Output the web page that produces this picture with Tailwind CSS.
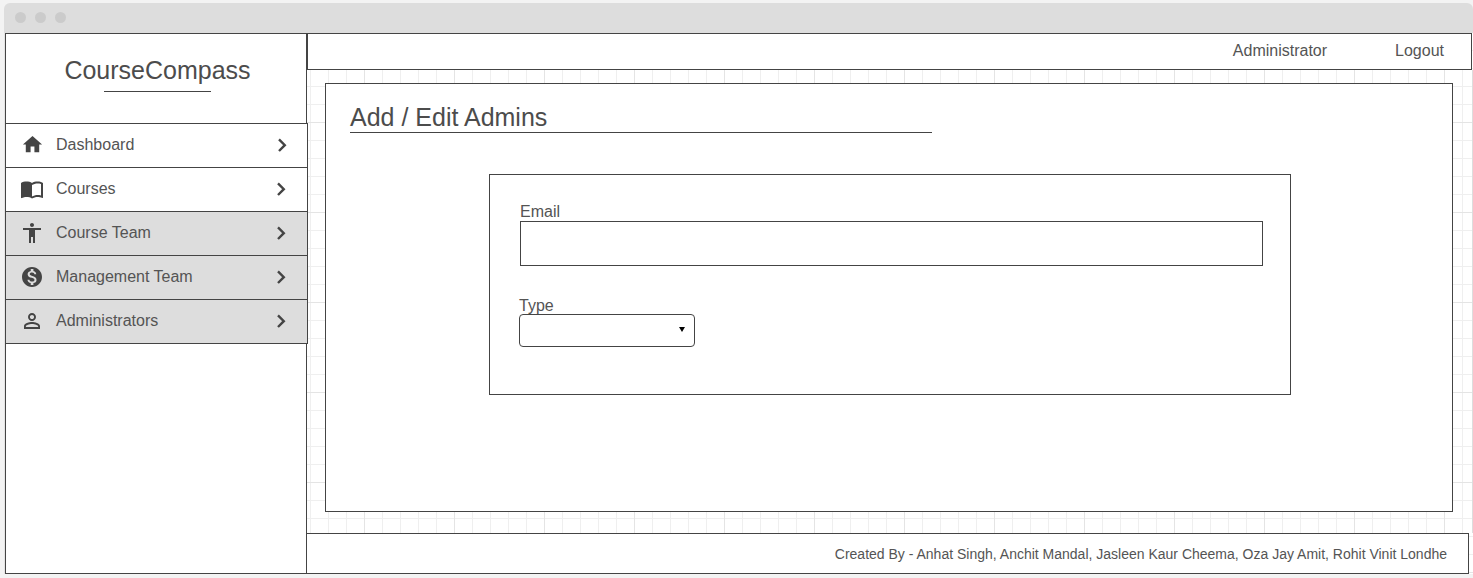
<!DOCTYPE html>
<html lang="en">
<head>
<meta charset="utf-8">
<meta name="viewport" content="width=device-width, initial-scale=1">
<title>CourseCompass</title>
<script src="https://cdn.jsdelivr.net/npm/@tailwindcss/browser@4"></script>
</head>
<body class="flex min-h-screen flex-col bg-[#f3f3f3] pt-[3px] pb-1 pl-1 font-['Liberation_Sans',Arial,sans-serif] text-base text-[#545454]">
  <!-- Window title bar -->
  <div class="flex h-[30px] shrink-0 items-center gap-[9px] rounded-t-md bg-[#ddd] pb-px pl-[11px]">
    <span class="size-[11px] rounded-full bg-[#cbcbcb]"></span>
    <span class="size-[11px] rounded-full bg-[#cbcbcb]"></span>
    <span class="size-[11px] rounded-full bg-[#cbcbcb]"></span>
  </div>

  <div class="flex flex-1 bg-white bg-[linear-gradient(#e4e4e4_1px,transparent_1px),linear-gradient(90deg,#e4e4e4_1px,transparent_1px),linear-gradient(#efefef_1px,transparent_1px),linear-gradient(90deg,#efefef_1px,transparent_1px)] bg-[length:90px_90px,90px_90px,18px_18px,18px_18px] bg-[position:0_-1px]">
    <aside class="relative ml-px w-[302px] shrink-0 border border-[#444] bg-white">
      <div class="flex h-[89px] flex-col items-center pt-[21px] pl-[3px]">
        <a href="#" class="text-[25px] leading-[30px] text-[#4c4c4c]">CourseCompass</a>
        <span class="mt-1.5 h-px w-[107px] bg-[#444]"></span>
      </div>
      <nav class="-mr-0.5 -ml-px divide-y divide-[#444] border border-[#444] bg-white" aria-label="Main">
        <a href="#" class="flex h-11 items-center pr-[18px] pb-0.5 pl-[15px]">
          <svg class="size-[23px]" viewBox="0 0 24 24" fill="#444" aria-hidden="true"><path d="M10 20v-6h4v6h5v-8h3L12 3 2 12h3v8z"/></svg>
          <span class="ml-3 flex-1">Dashboard</span>
          <svg class="size-[14px]" viewBox="0 0 14 14" fill="none" stroke="#444" stroke-width="2.4" aria-hidden="true"><path d="M4 1.400 9.800 7.200 4 13"/></svg>
        </a>
        <a href="#" class="flex h-11 items-center pr-[19px] pb-0.5 pl-[14px]">
          <svg class="size-6" viewBox="0 0 24 24" fill="#444" aria-hidden="true"><path d="M21 5c-1.110-.35-2.330-.5-3.500-.5-1.950 0-4.050.4-5.500 1.500-1.450-1.100-3.550-1.500-5.500-1.500S2.450 4.900 1 6v14.650c0 .25.25.5.5.5.1 0 .15-.05.25-.05C3.100 20.450 5.050 20 6.500 20c1.950 0 4.050.4 5.500 1.500 1.350-.85 3.800-1.500 5.500-1.500 1.650 0 3.350.3 4.750 1.050.1.050.15.050.25.050.25 0 .5-.25.5-.5V6c-.6-.45-1.250-.75-2-1zm0 13.500c-1.100-.35-2.300-.5-3.500-.5-1.700 0-4.150.65-5.500 1.500V8c1.350-.85 3.800-1.500 5.500-1.500 1.200 0 2.400.15 3.500.5v11.500z"/></svg>
          <span class="ml-3 flex-1">Courses</span>
          <svg class="size-[14px]" viewBox="0 0 14 14" fill="none" stroke="#444" stroke-width="2.4" aria-hidden="true"><path d="M4 1.400 9.800 7.200 4 13"/></svg>
        </a>
        <a href="#" class="flex h-11 items-center bg-[#ddd] pr-[19px] pb-0.5 pl-[14px]">
          <svg class="size-6" viewBox="0 0 24 24" fill="#444" aria-hidden="true"><path d="M12 2c1.100 0 2 .9 2 2s-.9 2-2 2-2-.9-2-2 .9-2 2-2zm9 7h-6v13h-2v-6h-2v6H9V9H3V7h18v2z"/></svg>
          <span class="ml-3 flex-1">Course Team</span>
          <svg class="size-[14px]" viewBox="0 0 14 14" fill="none" stroke="#444" stroke-width="2.4" aria-hidden="true"><path d="M4 1.400 9.800 7.200 4 13"/></svg>
        </a>
        <a href="#" class="flex h-11 items-center bg-[#ddd] pr-[19px] pb-0.5 pl-[14px]">
          <svg class="size-6" viewBox="0 0 24 24" fill="#444" aria-hidden="true"><path d="M12 2C6.480 2 2 6.480 2 12s4.480 10 10 10 10-4.480 10-10S17.520 2 12 2zm1.410 16.090V20h-2.670v-1.930c-1.710-.36-3.160-1.460-3.270-3.400h1.960c.1 1.050.82 1.870 2.650 1.870 1.960 0 2.400-.98 2.400-1.590 0-.83-.44-1.610-2.670-2.140-2.480-.6-4.180-1.620-4.180-3.670 0-1.720 1.390-2.840 3.110-3.210V4h2.670v1.950c1.860.45 2.790 1.860 2.850 3.390H14.300c-.05-1.110-.64-1.870-2.220-1.870-1.500 0-2.400.68-2.400 1.640 0 .84.65 1.390 2.670 1.910s4.180 1.390 4.180 3.910c-.01 1.830-1.380 2.830-3.120 3.160z"/></svg>
          <span class="ml-3 flex-1">Management Team</span>
          <svg class="size-[14px]" viewBox="0 0 14 14" fill="none" stroke="#444" stroke-width="2.4" aria-hidden="true"><path d="M4 1.400 9.800 7.200 4 13"/></svg>
        </a>
        <a href="#" class="flex h-[43px] items-center bg-[#ddd] pr-[19px] pb-0.5 pl-[14px]">
          <svg class="size-6" viewBox="0 0 24 24" fill="#444" aria-hidden="true"><path d="M12 5.900c1.160 0 2.100.94 2.100 2.100s-.94 2.100-2.100 2.100S9.900 9.160 9.900 8s.94-2.100 2.100-2.100m0 9c2.970 0 6.100 1.460 6.100 2.100v1.100H5.900V17c0-.64 3.130-2.100 6.100-2.100M12 4C9.790 4 8 5.790 8 8s1.790 4 4 4 4-1.790 4-4-1.790-4-4-4zm0 9c-2.670 0-8 1.340-8 4v3h16v-3c0-2.660-5.330-4-8-4z"/></svg>
          <span class="ml-3 flex-1">Administrators</span>
          <svg class="size-[14px]" viewBox="0 0 14 14" fill="none" stroke="#444" stroke-width="2.4" aria-hidden="true"><path d="M4 1.400 9.800 7.200 4 13"/></svg>
        </a>
      </nav>
    </aside>

    <div class="flex min-w-0 flex-1 flex-col">
      <header class="mr-px flex h-[37px] items-center justify-end gap-[68px] border border-[#444] bg-white pr-[27px] pb-0.5">
        <a href="#">Administrator</a>
        <a href="#">Logout</a>
      </header>

      <main class="flex flex-1 flex-col border-r border-[#ddd] pt-[13px] pr-[19px] pb-[21px] pl-[18px]">
        <section class="flex-1 border border-[#444] bg-white px-6 pt-[18px]">
          <h1 class="w-[54%] border-b border-[#444] text-[25px] leading-[30px] text-[#4c4c4c]">Add / Edit Admins</h1>
          <div class="mt-[41px] pl-0.5">
            <form class="mx-auto w-full max-w-[802px] border border-[#444] pt-7 pr-[27px] pb-[47px] pl-[29px]">
              <div class="flex flex-col pl-px">
                <label for="email" class="h-[18px] leading-[18px]">Email</label>
                <input id="email" type="email" class="h-[45px] w-full border border-[#444] bg-white px-3">
              </div>
              <div class="mt-[31px] flex flex-col">
                <label for="type" class="h-[17px] leading-[18px]">Type</label>
                <div class="relative w-44">
                  <select id="type" class="block h-[33px] w-full appearance-none rounded-[4px] border border-[#444] bg-transparent px-3">
                    <option value=""></option>
                  </select>
                  <svg class="pointer-events-none absolute top-[13px] right-[10px] h-[5px] w-[6px]" viewBox="0 0 6 5" aria-hidden="true"><path d="M0 0h6L3 5z"/></svg>
                </div>
              </div>
            </form>
          </div>
        </section>
      </main>

      <footer class="mr-1 flex h-[41px] items-center justify-end border-y border-r border-[#444] bg-white pr-[21px] text-sm">Created By - Anhat Singh, Anchit Mandal, Jasleen Kaur Cheema, Oza Jay Amit, Rohit Vinit Londhe</footer>
    </div>
  </div>
</body>
</html>
